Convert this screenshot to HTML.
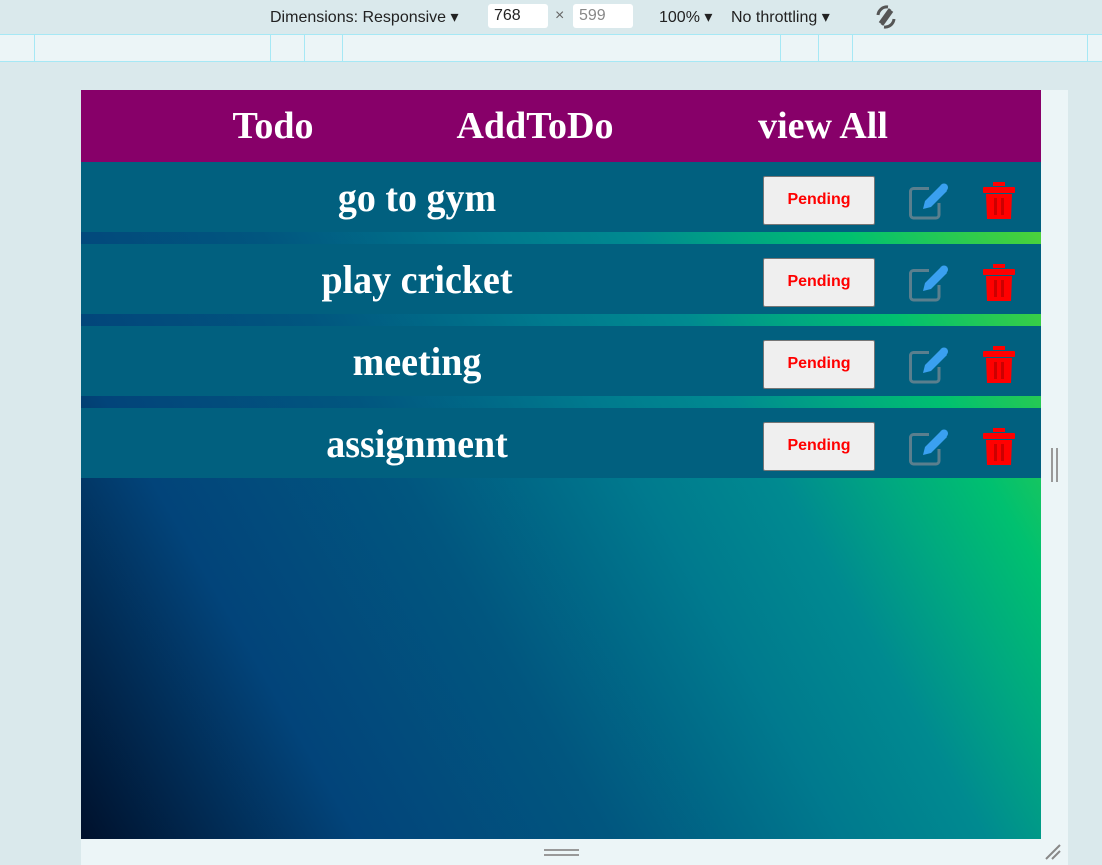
<!DOCTYPE html>
<html><head><meta charset="utf-8"><style>
*{margin:0;padding:0;box-sizing:border-box}
body{width:1102px;height:865px;background:#dae9ec;position:relative;overflow:hidden;font-family:"Liberation Sans",sans-serif}
.tb{position:absolute;top:0;left:0;width:1102px;height:34px;font-size:16px;color:#222}
.tb span{position:absolute;top:7px}
.inp{position:absolute;top:4px;height:24px;background:#fff;border-radius:3px;padding:3px 6px;font-size:16px}
.ruler{position:absolute;top:34px;left:0;width:1102px;height:28px;background:#ecf5f7;border-top:1px solid #a6e8f5;border-bottom:1px solid #a6e8f5}
.ruler i{position:absolute;top:0;height:26px;width:1px;background:#a6e8f5}
.side{position:absolute;left:1041px;top:90px;width:27px;height:775px;background:#ecf5f7}
.bot{position:absolute;left:81px;top:839px;width:987px;height:26px;background:#ecf5f7}
.app{position:absolute;left:81px;top:90px;width:960px;height:749px;background:linear-gradient(60deg,#00112c 0%,#02447a 20%,#01567f 38%,#007a8e 55%,#008a90 65%,#00a880 73%,#00c070 80%,#40d040 92%,#70d830 100%);overflow:hidden}
.hdr{height:72px;background:#870069;position:relative;font-family:"Liberation Serif",serif;font-weight:bold;font-size:38px;color:#fff}
.hdr span{position:absolute;top:14px;transform:translateX(-50%);transform-origin:center}
.row{position:absolute;left:0;width:960px;height:70px;background:#01607f}
.row .t{position:absolute;left:336px;top:12px;transform:translateX(-50%) scaleX(0.95);font-family:"Liberation Serif",serif;font-weight:bold;font-size:40px;color:#fff;white-space:nowrap}
.btn{position:absolute;left:682px;top:14px;width:112px;height:49px;background:#efefef;border:1px solid #767676;border-radius:2px;color:#f00;font-weight:bold;font-size:16px;text-align:center;line-height:46px}
.ic{position:absolute;top:0;left:820px}
</style></head><body>
<div class="tb">
<span style="left:270px">Dimensions: Responsive ▾</span>
<div class="inp" style="left:488px;width:60px">768</div>
<span style="left:555px;color:#666">×</span>
<div class="inp" style="left:573px;width:60px;color:#888">599</div>
<span style="left:659px">100% ▾</span>
<span style="left:731px">No throttling ▾</span>
<svg style="position:absolute;left:872px;top:3px" width="28" height="28" viewBox="0 0 28 28"><g fill="none" stroke="#555" stroke-width="3"><path d="M8 20 L18 6"/><path d="M10 22 L20 8"/><path d="M6 12 A9 9 0 0 1 16 4"/><path d="M22 16 A9 9 0 0 1 12 24"/></g></svg>
</div>
<div class="ruler"><i style="left:34px"></i><i style="left:270px"></i><i style="left:304px"></i><i style="left:342px"></i><i style="left:780px"></i><i style="left:818px"></i><i style="left:852px"></i><i style="left:1087px"></i></div>
<div class="side"><div style="position:absolute;left:10px;top:358px;width:2px;height:34px;background:#999"></div><div style="position:absolute;left:15px;top:358px;width:2px;height:34px;background:#999"></div></div>
<div class="bot"><div style="position:absolute;left:463px;top:10px;width:35px;height:2px;background:#999"></div><div style="position:absolute;left:463px;top:15px;width:35px;height:2px;background:#999"></div>
<svg style="position:absolute;left:963px;top:4px" width="18" height="18"><path d="M2 16 L16 2 M8 16 L16 8" stroke="#888" stroke-width="2"/></svg></div>
<div class="app">
<div class="hdr"><span style="left:192px">Todo</span><span style="left:454px">AddToDo</span><span style="left:742px">view All</span></div>
<div class="row" style="top:72px"><div class="t">go to gym</div><div class="btn">Pending</div>
<svg class="ic" width="140" height="70"><path d="M28 26.5 H12.5 a3 3 0 0 0 -3 3 V53 a3 3 0 0 0 3 3 H35 a3 3 0 0 0 3-3 V41" fill="none" stroke="#5a7f8e" stroke-width="3"/><path d="M22 47 L24 39 L40 23 L46 29 L30 45 Z" fill="#3aa0f0"/><circle cx="43" cy="25.5" r="4" fill="#3aa0f0"/><rect x="92" y="20" width="12" height="4" fill="#f00"/><rect x="82" y="25" width="32" height="6" rx="1" fill="#f00"/><path d="M85 32 H111 L110 57 H86 Z" fill="#f00"/><rect x="93" y="36" width="3" height="17" fill="#c00"/><rect x="100" y="36" width="3" height="17" fill="#c00"/></svg></div>
<div class="row" style="top:154px"><div class="t">play cricket</div><div class="btn">Pending</div>
<svg class="ic" width="140" height="70"><path d="M28 26.5 H12.5 a3 3 0 0 0 -3 3 V53 a3 3 0 0 0 3 3 H35 a3 3 0 0 0 3-3 V41" fill="none" stroke="#5a7f8e" stroke-width="3"/><path d="M22 47 L24 39 L40 23 L46 29 L30 45 Z" fill="#3aa0f0"/><circle cx="43" cy="25.5" r="4" fill="#3aa0f0"/><rect x="92" y="20" width="12" height="4" fill="#f00"/><rect x="82" y="25" width="32" height="6" rx="1" fill="#f00"/><path d="M85 32 H111 L110 57 H86 Z" fill="#f00"/><rect x="93" y="36" width="3" height="17" fill="#c00"/><rect x="100" y="36" width="3" height="17" fill="#c00"/></svg></div>
<div class="row" style="top:236px"><div class="t">meeting</div><div class="btn">Pending</div>
<svg class="ic" width="140" height="70"><path d="M28 26.5 H12.5 a3 3 0 0 0 -3 3 V53 a3 3 0 0 0 3 3 H35 a3 3 0 0 0 3-3 V41" fill="none" stroke="#5a7f8e" stroke-width="3"/><path d="M22 47 L24 39 L40 23 L46 29 L30 45 Z" fill="#3aa0f0"/><circle cx="43" cy="25.5" r="4" fill="#3aa0f0"/><rect x="92" y="20" width="12" height="4" fill="#f00"/><rect x="82" y="25" width="32" height="6" rx="1" fill="#f00"/><path d="M85 32 H111 L110 57 H86 Z" fill="#f00"/><rect x="93" y="36" width="3" height="17" fill="#c00"/><rect x="100" y="36" width="3" height="17" fill="#c00"/></svg></div>
<div class="row" style="top:318px"><div class="t">assignment</div><div class="btn">Pending</div>
<svg class="ic" width="140" height="70"><path d="M28 26.5 H12.5 a3 3 0 0 0 -3 3 V53 a3 3 0 0 0 3 3 H35 a3 3 0 0 0 3-3 V41" fill="none" stroke="#5a7f8e" stroke-width="3"/><path d="M22 47 L24 39 L40 23 L46 29 L30 45 Z" fill="#3aa0f0"/><circle cx="43" cy="25.5" r="4" fill="#3aa0f0"/><rect x="92" y="20" width="12" height="4" fill="#f00"/><rect x="82" y="25" width="32" height="6" rx="1" fill="#f00"/><path d="M85 32 H111 L110 57 H86 Z" fill="#f00"/><rect x="93" y="36" width="3" height="17" fill="#c00"/><rect x="100" y="36" width="3" height="17" fill="#c00"/></svg></div>
</div>
</body></html>
